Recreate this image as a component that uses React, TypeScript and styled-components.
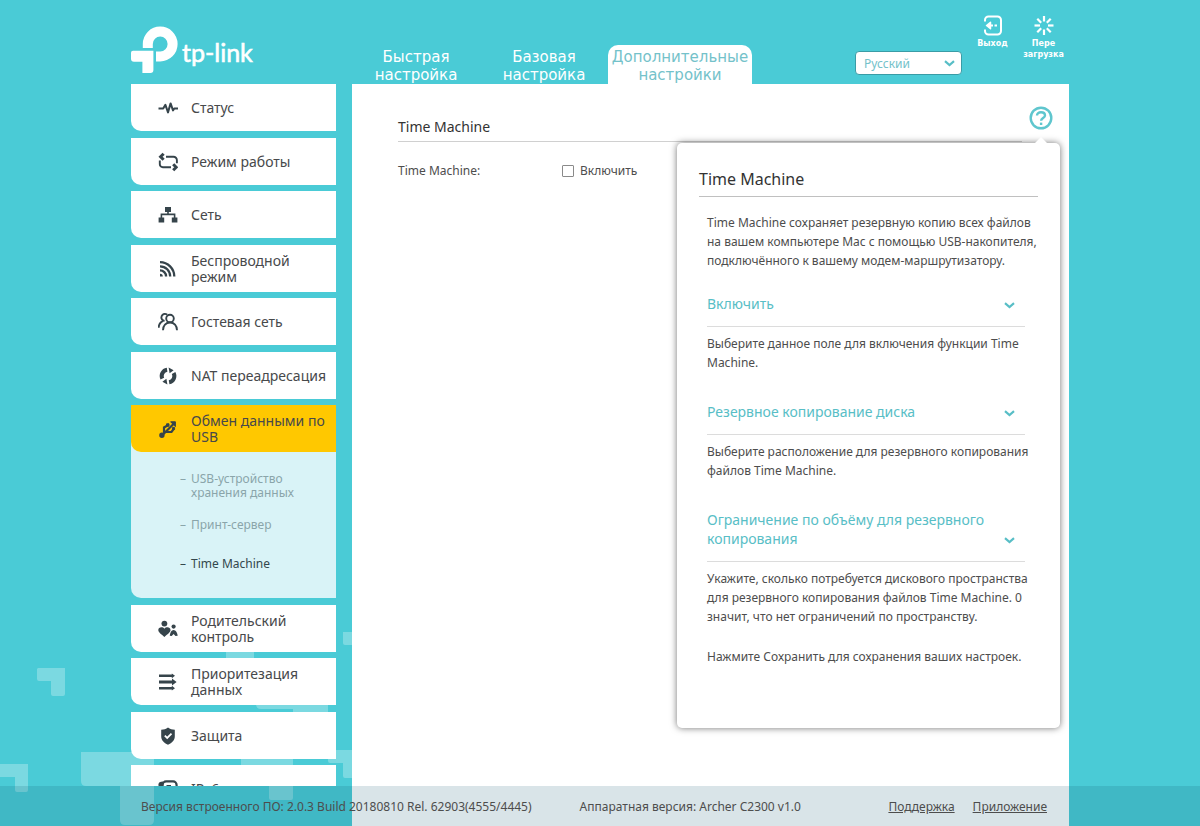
import React from 'react';
import styled, { createGlobalStyle } from 'styled-components';

const teal = '#4acbd6';
const accent = '#58bec6';
const ink = '#36444b';
const sans = "'Noto Sans', Verdana, sans-serif";
const wideSans = "'DejaVu Sans', Verdana, sans-serif";

const GlobalStyle = createGlobalStyle`
  * { box-sizing: border-box; }
  body { margin: 0; background: ${teal}; font-family: ${sans}; font-size: 12px; color: #4d4d4d; }
  ul, h1, h2, h3, p { margin: 0; padding: 0; font-weight: normal; }
  ul { list-style: none; }
  button, select { font-family: inherit; margin: 0; padding: 0; border: 0; background: none; cursor: pointer; }
  a { color: inherit; text-decoration: none; }
`;

const Page = styled.div`
  position: relative;
  min-height: 100vh;
  display: flex;
  flex-direction: column;
  overflow: hidden;
`;

const Backdrop = styled.svg`
  position: absolute;
  left: 0;
  bottom: 0;
  fill: rgba(255, 255, 255, 0.27);
`;

const Container = styled.div<{ $grow?: boolean }>`
  position: relative;
  width: 100%;
  max-width: 938px;
  margin: 0 auto;
  display: grid;
  grid-template-columns: 205px minmax(0, 1fr);
  column-gap: 16px;
  flex: ${p => (p.$grow ? '1' : 'none')};
`;

const Brand = styled.a`
  align-self: end;
  display: block;
  height: 60px;
`;

const TopBar = styled.header`
  display: flex;
  align-items: flex-end;
  height: 84px;
`;

const Tabs = styled.nav`
  display: flex;
  align-items: flex-end;
  font-family: ${wideSans};
`;

const Tab = styled.a<{ $active?: boolean }>`
  width: ${p => (p.$active ? 144 : 128)}px;
  height: 39px;
  padding-top: 3px;
  border-radius: 10px 10px 0 0;
  background: ${p => (p.$active ? '#fff' : 'transparent')};
  color: ${p => (p.$active ? '#74c2ca' : '#fff')};
  font-size: 15px;
  line-height: 18px;
  text-align: center;
`;

const LanguageBox = styled.label`
  position: relative;
  width: 107px;
  margin: 0 5px 9px auto;
  svg { position: absolute; right: 7px; top: 9px; pointer-events: none; }
`;

const LanguageSelect = styled.select`
  appearance: none;
  display: block;
  width: 100%;
  height: 24px;
  padding: 0 8px;
  border: 1px solid #3a9ca6;
  border-radius: 4px;
  background: #fff;
  color: #74c2ca;
  font-size: 12px;
`;

const TopAction = styled.button`
  align-self: flex-start;
  width: 51px;
  margin-top: 15px;
  display: flex;
  flex-direction: column;
  align-items: center;
  color: #fff;
  font-family: ${wideSans};
  font-size: 8px;
  font-weight: bold;
  line-height: 11px;
  svg { margin-bottom: 2px; }
`;

const Sidebar = styled.nav`
  max-height: calc(100vh - 124px);
  overflow: hidden;
`;

const Menu = styled.ul`
  display: flex;
  flex-direction: column;
  gap: 6px;
  > li:nth-child(odd) { margin-bottom: 1px; }
`;

const MenuItem = styled.li<{ $open?: boolean }>`
  border-radius: 0 0 0 10px;
  background: ${p => (p.$open ? '#d9f3f7' : 'transparent')};
`;

const MenuLink = styled.a<{ $active?: boolean }>`
  display: grid;
  grid-template-columns: 20px 1fr;
  column-gap: 13px;
  align-items: center;
  height: 47px;
  padding-left: 27px;
  border-radius: 0 0 0 10px;
  background: ${p => (p.$active ? '#ffc800' : '#fff')};
  color: #47494b;
  font-size: 14px;
  line-height: 16px;
`;

const MenuIcon = styled.svg`
  display: block;
  color: ${ink};
`;

const SubMenu = styled.ul`
  display: flex;
  flex-direction: column;
  padding: 20px 16px 20px 49px;
`;

const SubItem = styled.li<{ $active?: boolean }>`
  display: grid;
  grid-template-columns: 11px 1fr;
  padding-bottom: 18px;
  color: ${p => (p.$active ? '#33474c' : '#8aa5aa')};
  line-height: 14px;
  &:last-child { padding: 7px 0; }
`;

const Panel = styled.main`
  display: flex;
  align-items: flex-start;
  background: #fff;
`;

const Content = styled.section`
  flex: 1;
  margin-left: 46px;
`;

const Heading = styled.h1`
  padding: 33px 0 4px;
  border-bottom: 1px solid #d0d0d0;
  color: #333;
  font-size: 14px;
  line-height: 20px;
`;

const Field = styled.div`
  display: flex;
  align-items: center;
  padding-top: 20px;
  line-height: 18px;
`;

const FieldName = styled.span`
  width: 164px;
`;

const CheckLabel = styled.label`
  display: flex;
  align-items: center;
  gap: 6px;
`;

const Checkbox = styled.input`
  appearance: none;
  width: 12px;
  height: 12px;
  margin: 0;
  border: 1px solid #8a8a8a;
  border-radius: 1px;
  background: #fff;
  &:checked { background: ${teal}; }
`;

const HelpButton = styled.button`
  width: 24px;
  height: 24px;
  margin: 22px 16px 0 7px;
  svg { display: block; }
`;

const HelpPanel = styled.aside`
  position: absolute;
  top: 59px;
  right: 9px;
  width: 383px;
  padding: 24px 22px 62px;
  border-radius: 5px;
  background: #fff;
  box-shadow: 0 0 7px rgba(0, 0, 0, 0.55);
  line-height: 19px;
`;

const HelpArrow = styled.svg`
  position: absolute;
  top: -6px;
  right: 12px;
  fill: #fff;
`;

const HelpTitle = styled.h2`
  padding-bottom: 5px;
  border-bottom: 1px solid #c0c0c0;
  color: #333;
  font-size: 16px;
  line-height: 24px;
`;

const HelpBody = styled.div`
  padding: 16px 0 0 8px;
`;

const HelpIntro = styled.p`
  margin-bottom: 24px;
`;

const HelpSection = styled.section`
  & + & { margin-top: 30px; }
`;

const HelpHeading = styled.button`
  display: flex;
  justify-content: space-between;
  align-items: flex-end;
  width: 318px;
  padding: 0 10px 13px 0;
  border-bottom: 1px solid #dcdcdc;
  color: ${accent};
  font-size: 14px;
  line-height: 19px;
  text-align: left;
  svg { flex: none; margin-bottom: 4px; }
`;

const HelpText = styled.p`
  padding-top: 7px;
`;

const HelpNote = styled.p`
  margin-top: 21px;
`;

const Footer = styled.footer`
  position: absolute;
  left: 0;
  right: 0;
  bottom: 0;
  background: rgba(10, 80, 107, 0.155);
`;

const FooterInner = styled.div`
  display: flex;
  align-items: center;
  max-width: 938px;
  height: 40px;
  margin: 0 auto;
  padding: 0 22px 0 10px;
  gap: 48px;
  white-space: nowrap;
`;

const FooterLinks = styled.div`
  display: flex;
  gap: 18px;
  margin-left: auto;
  a { text-decoration: underline; }
`;

const Chevron = () => (
  <svg width="11" height="7" viewBox="0 0 11 7" fill="none" stroke={accent} strokeWidth="2.2">
    <path d="M1 1.2L5.5 5L10 1.2" />
  </svg>
);

const icons: Record<string, React.ReactNode> = {
  status: <path d="M.5 10.4h4.700l2.200-3.600 2.600 7.600 2.600-9 2.400 7 1.200-2H20" fill="none" stroke="currentColor" strokeWidth="2" strokeLinejoin="round" />,
  mode: (
    <g fill="none" stroke="currentColor" strokeWidth="1.900">
      <path d="M8 4.800h7.500a3.400 3.400 0 0 1 3.400 3.400v3M13 15.200H4.800a3 3 0 0 1-3-3V8.600" />
      <path d="M5.600 1.800L2.600 4.800l3 3M15.200 12.200l3 3-3 3" strokeWidth="3" />
    </g>
  ),
  network: (
    <g>
      <path d="M7 2h6v5H7zM.6 12.4h5.6v5H.6zM13.8 12.4h5.6v5h-5.6z" fill="currentColor" />
      <path d="M10 6v3.4M3.4 13V9.4h13.2V13" fill="none" stroke="currentColor" strokeWidth="1.6" />
    </g>
  ),
  wireless: (
    <g fill="none" stroke="currentColor" strokeWidth="2.300">
      <path d="M2 3.200A14.300 14.300 0 0 1 16.300 17.500M2 7.300A10.200 10.200 0 0 1 12.200 17.500M2 11.400A6.100 6.100 0 0 1 8.100 17.500" />
      <path d="M2 14.700A2.800 2.800 0 0 1 4.800 17.500H2z" fill="currentColor" stroke="none" />
    </g>
  ),
  guest: (
    <g fill="none" stroke="currentColor" strokeWidth="1.900">
      <circle cx="12" cy="6.500" r="3.800" />
      <path d="M9.200 2.800A3.500 3.500 0 1 0 6.600 8.900" />
      <path d="M.7 15.800c0-3.200 1.700-5.600 4.500-6.900M5 18.200c0-4.500 2.900-7.700 7-7.700s7 3.200 7 7.700" />
    </g>
  ),
  nat: (
    <g fill="none" stroke="currentColor" strokeWidth="4">
      <path d="M4.300 12.700A6.300 6.300 0 0 1 9.100 3.800M15.600 7A6.300 6.300 0 0 1 11.100 16.200" />
      <path d="M10.600 1.400l5 2.800-4 3zM9.400 18.600l-5-2.800 4-3z" fill="currentColor" stroke="none" />
    </g>
  ),
  usb: (
    <g stroke="currentColor" fill="none" strokeWidth="2.200">
      <path d="M4 16.500L16 4.500M6 14V8.500l3.500-2M8 13h5.500l2.500-3.500" />
      <circle cx="3.900" cy="16.200" r="1.600" fill="currentColor" />
      <path d="M12.600 2.800h4.800v4.800zM8.600 4.800h2.400v2.400H8.600zM14.600 8.400h2v2h-2z" fill="currentColor" strokeWidth="1" />
    </g>
  ),
  parental: (
    <g fill="currentColor">
      <circle cx="6.400" cy="4.600" r="2.900" />
      <path d="M6.400 18C3.500 15.400.3 13.600.3 11.100.3 7.900 4.700 7.400 6.400 9.800c1.700-2.400 6.100-1.900 6.100 1.300 0 2.500-3.200 4.300-6.100 6.900z" />
      <circle cx="15.600" cy="7.600" r="2.100" />
      <path d="M11.800 16.800c.2-3 1.700-5.900 3.800-5.900s3.900 2.900 4.100 5.900l-2.200.3-1.900-2-1.900 2z" />
    </g>
  ),
  qos: (
    <path fill="currentColor" d="M1 2.600h12.800V1.400L17 3.800 13.800 6.200V5H1zM1 8.600h13V6.600L18.600 10 14 13.400v-2H1zM1 15h12.800v-1.200l3.200 2.400-3.200 2.400v-1.200H1z" />
  ),
  shield: (
    <g>
      <path d="M10 1.400c2 1.500 4.200 2.100 6.800 2.300v6.500c0 4-2.700 6.700-6.800 8.500-4.100-1.800-6.800-4.500-6.800-8.500V3.700C5.800 3.500 8 2.900 10 1.400z" fill="currentColor" />
      <path d="M6.800 9.600l2.400 2.300 4.300-4.300" fill="none" stroke="#fff" strokeWidth="1.800" />
    </g>
  ),
  ipv6: (
    <g>
      <path d="M.5 5.200C.5 3.600 2 3 5 2.600V17H2.500a2 2 0 0 1-2-2z" fill="currentColor" />
      <rect x="4.600" y="2.400" width="14" height="15" rx="3.500" fill="none" stroke="currentColor" strokeWidth="2.200" />
      <path d="M8.500 7h4.500M8.500 10.500h6.500" stroke="currentColor" strokeWidth="2" />
    </g>
  ),
};

type Entry = { icon: string; label: string; sub?: string[] };

const menu: Entry[] = [
  { icon: 'status', label: 'Статус' },
  { icon: 'mode', label: 'Режим работы' },
  { icon: 'network', label: 'Сеть' },
  { icon: 'wireless', label: 'Беспроводной режим' },
  { icon: 'guest', label: 'Гостевая сеть' },
  { icon: 'nat', label: 'NAT переадресация' },
  { icon: 'usb', label: 'Обмен данными по USB', sub: ['USB-устройство хранения данных', 'Принт-сервер', 'Time Machine'] },
  { icon: 'parental', label: 'Родительский контроль' },
  { icon: 'qos', label: 'Приоритезация данных' },
  { icon: 'shield', label: 'Защита' },
  { icon: 'ipv6', label: 'IPv6' },
];

const help = [
  { title: 'Включить', text: 'Выберите данное поле для включения функции Time Machine.' },
  { title: 'Резервное копирование диска', text: 'Выберите расположение для резервного копирования файлов Time Machine.' },
  {
    title: 'Ограничение по объёму для резервного копирования',
    text: 'Укажите, сколько потребуется дискового пространства для резервного копирования файлов Time Machine. 0 значит, что нет ограничений по пространству.',
  },
];

const rays = [0, 45, 90, 135, 180, 225, 270, 315];

export default function App() {
  return (
    <Page>
      <GlobalStyle />
      <Backdrop width="360" height="200" viewBox="0 626 360 200" aria-hidden="true">
        <path d="M38 668h27v26q0 2-2 2h-10q-2 0-2-2v-13H39q-2 0-2-2v-10z" />
        <path d="M0 764h28v26q0 2-2 2h-9q-2 0-2-2v-13H0z" />
        <path d="M81 752h73v68q0 5-5 5h-24q-5 0-5-5v-34H86q-5 0-5-5z" />
        <path d="M226 651h28v28h-14v-14h-14z" />
        <path d="M256 690h72v50h-35v-31h-32q-5 0-5-5z" />
        <path d="M241 748h52v50q0 2-2 2h-20q-2 0-2-2v-24h-28z" />
        <path d="M328 750h32v28h-15q-2 0-2-2v-13h-13q-2 0-2-2z" />
        <path d="M343 632h17v13h-15q-2 0-2-2z" />
      </Backdrop>

      <Container>
        <Brand href="#" aria-label="tp-link">
          <svg width="130" height="60" viewBox="0 0 130 60">
            <path d="M16.800 24v-4A12.400 12.400 0 1 1 29.200 32.400H25" fill="none" stroke="#fff" strokeWidth="10" />
            <path d="M2 26.700h20.400V46q0 3-3 3h-8V37.700H3q-3 0-3-3v-6q0-2 2-2z" fill="#fff" />
            <text x="51" y="38" fill="#fff" stroke="#fff" strokeWidth="0.6" fontFamily="Lato, sans-serif" fontSize="25">tp-link</text>
          </svg>
        </Brand>
        <TopBar>
          <Tabs>
            <Tab href="#">Быстрая<br />настройка</Tab>
            <Tab href="#">Базовая<br />настройка</Tab>
            <Tab href="#" $active>Дополнительные<br />настройки</Tab>
          </Tabs>
          <LanguageBox>
            <LanguageSelect aria-label="Язык" defaultValue="ru">
              <option value="ru">Русский</option>
            </LanguageSelect>
            <Chevron />
          </LanguageBox>
          <TopAction type="button">
            <svg width="20" height="21" viewBox="0 0 20 21" fill="none" stroke="#fff" strokeWidth="2">
              <path d="M2 6.500V5a3.500 3.500 0 0 1 3.500-3.500h9A3.500 3.500 0 0 1 18 5v11a3.500 3.500 0 0 1-3.500 3.500h-9A3.500 3.500 0 0 1 2 16v-1.500" />
              <path d="M7.500 10.500h2.500M11.500 10.500h2.500" />
              <path d="M7.500 7.300L3.500 10.500L7.500 13.700z" fill="#fff" strokeWidth="1.500" strokeLinejoin="round" />
            </svg>
            Выход
          </TopAction>
          <TopAction type="button">
            <svg width="20" height="21" viewBox="0 0 20 21" stroke="#fff" strokeWidth="2.200">
              {rays.map(a => (
                <path key={a} d="M10 1v5.500" transform={`rotate(${a} 10 10.500)`} />
              ))}
            </svg>
            Пере загрузка
          </TopAction>
        </TopBar>
      </Container>

      <Container $grow>
        <Sidebar>
          <Menu>
            {menu.map(item => (
              <MenuItem key={item.icon} $open={!!item.sub}>
                <MenuLink href="#" $active={!!item.sub}>
                  <MenuIcon width="20" height="20" viewBox="0 0 20 20" aria-hidden="true">{icons[item.icon]}</MenuIcon>
                  {item.label}
                </MenuLink>
                {item.sub && (
                  <SubMenu>
                    {item.sub.map((label, i) => (
                      <SubItem key={label} $active={i === 2}>
                        <span>–</span>
                        <a href="#">{label}</a>
                      </SubItem>
                    ))}
                  </SubMenu>
                )}
              </MenuItem>
            ))}
          </Menu>
        </Sidebar>

        <Panel>
          <Content>
            <Heading>Time Machine</Heading>
            <Field>
              <FieldName>Time Machine:</FieldName>
              <CheckLabel>
                <Checkbox type="checkbox" />
                Включить
              </CheckLabel>
            </Field>
          </Content>
          <HelpButton type="button" aria-label="Справка">
            <svg width="24" height="24" viewBox="0 0 24 24" fill="none" stroke="#5fc6ce" strokeWidth="2.400">
              <circle cx="12" cy="12" r="10.300" />
              <path d="M8 9.600C8 7.400 9.700 6.200 12 6.200s4 1.200 4 3.200c0 2.600-3.900 2.700-3.900 5.400" />
              <path d="M12.100 16.600v2.400" />
            </svg>
          </HelpButton>
        </Panel>

        <HelpPanel>
          <HelpArrow width="14" height="7" viewBox="0 0 14 7" aria-hidden="true"><path d="M0 7L7 0l7 7z" /></HelpArrow>
          <HelpTitle>Time Machine</HelpTitle>
          <HelpBody>
            <HelpIntro>
              Time Machine сохраняет резервную копию всех файлов на вашем компьютере Mac с помощью USB-накопителя, подключённого к вашему модем-маршрутизатору.
            </HelpIntro>
            {help.map(h => (
              <HelpSection key={h.title}>
                <HelpHeading type="button">{h.title}<Chevron /></HelpHeading>
                <HelpText>{h.text}</HelpText>
              </HelpSection>
            ))}
            <HelpNote>Нажмите Сохранить для сохранения ваших настроек.</HelpNote>
          </HelpBody>
        </HelpPanel>
      </Container>

      <Footer>
        <FooterInner>
          <span>Версия встроенного ПО: 2.0.3 Build 20180810 Rel. 62903(4555/4445)</span>
          <span>Аппаратная версия: Archer C2300 v1.0</span>
          <FooterLinks>
            <a href="#">Поддержка</a>
            <a href="#">Приложение</a>
          </FooterLinks>
        </FooterInner>
      </Footer>
    </Page>
  );
}
